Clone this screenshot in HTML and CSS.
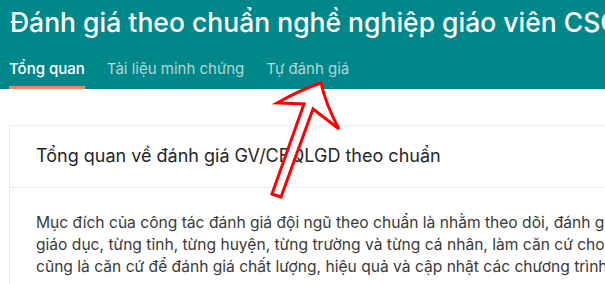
FILE: index.html
```html
<!DOCTYPE html>
<html lang="vi">
<head>
    <meta charset="UTF-8">
    <title>Đánh giá theo chuẩn</title>
    <link rel="stylesheet" href="styles.css">
</head>
<body>
    <div class="header">
        <h1 class="title">Đánh giá theo chuẩn nghề nghiệp giáo viên CSGDPT</h1>
        <div class="tabs">
            <span class="tab active">Tổng quan</span>
            <span class="tab">Tài liệu minh chứng</span>
            <span class="tab">Tự đánh giá</span>
        </div>
    </div>

    <div class="content">
        <div class="card">
            <div class="card-head">Tổng quan về đánh giá GV/CBQLGD theo chuẩn</div>
            <div class="card-body">
                <p>Mục đích của công tác đánh giá đội ngũ theo chuẩn là nhằm theo dõi, đánh giá năng lực đội ngũ của ngành</p>
                <p>giáo dục, từng tỉnh, từng huyện, từng trường và từng cá nhân, làm căn cứ cho công tác bồi dưỡng. Kết quả</p>
                <p>cũng là căn cứ để đánh giá chất lượng, hiệu quả và cập nhật các chương trình đào tạo, bồi dưỡng.</p>
            </div>
        </div>
    </div>

    <!-- red arrow drawn over the page -->
    <svg class="arrow" width="605" height="284" viewBox="0 0 605 284">
        <path d="M321 83 Q300 90 277 103 L304 104 L272 194 L281 197 L313 109 L339 129 Q326 105 321 83 Z"
              fill="#fff" stroke="#f00" stroke-width="3" stroke-linejoin="miter"/>
    </svg>
</body>
</html>
```

FILE: styles.css
```css
body {
    margin: 0;
    font-family: Inter, "Noto Sans", sans-serif;
    background: #fff;
    overflow: hidden;
    height: 284px;
}
.header {
    background: #00878a;
    height: 89px;
    padding-left: 10px;
    white-space: nowrap;
    overflow: hidden;
}
.title {
    margin: 0;
    padding-top: 3px;
    font-size: 26.5px;
    font-weight: 500;
    color: #fff;
    line-height: 38px;
}
.tabs {
    display: flex;
    gap: 22px;
    margin-top: 18px;
    margin-left: -1px;
}
.tab {
    font-size: 15px;
    color: #b4d6d6;
    line-height: 20px;
    padding-bottom: 7px;
    border-bottom: 3px solid transparent;
}
.tab.active {
    color: #fff;
    font-weight: 500;
    border-bottom-color: #f48a4e;
}
.content {
    padding: 36px 0 0 9px;
}
.card {
    border: 1px solid #ececec;
    border-right: none;
    white-space: nowrap;
    overflow: hidden;
}
.card-head {
    padding: 19px 26px 20px;
    font-size: 18px;
    color: #262626;
    line-height: 22px;
    border-bottom: 1px solid #ececec;
}
.card-body {
    padding: 24px 26px;
}
.card-body p {
    margin: 0;
    font-size: 15.6px;
    line-height: 22px;
    color: #3a3a3a;
}
.arrow {
    position: absolute;
    left: 0;
    top: 0;
}
```
